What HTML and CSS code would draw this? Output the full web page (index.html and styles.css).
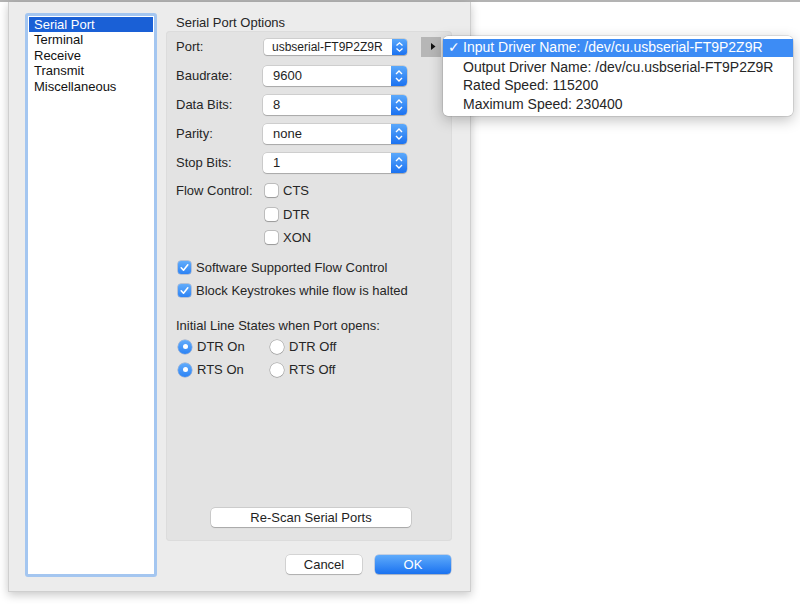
FILE: index.html
```html
<!DOCTYPE html>
<html>
<head>
<meta charset="utf-8">
<link rel="stylesheet" href="styles.css">
</head>
<body>
<div class="topline"></div>
<div class="window">
  <div class="sidebar">
    <ul class="list">
      <li class="selected">Serial Port</li>
      <li>Terminal</li>
      <li>Receive</li>
      <li>Transmit</li>
      <li>Miscellaneous</li>
    </ul>
  </div>
  <div class="main">
    <div class="group-title">Serial Port Options</div>
    <div class="group">
      <div class="row">
        <span class="label">Port:</span>
        <div class="popup small"><span class="ptext">usbserial-FT9P2Z9R</span><span class="stepper"><svg width="15" height="16" viewBox="0 0 15 16"><polyline points="4.5,6.5 7.5,3.8 10.5,6.5" fill="none" stroke="#fff" stroke-width="1.3"/><polyline points="4.5,9.5 7.5,12.2 10.5,9.5" fill="none" stroke="#fff" stroke-width="1.3"/></svg></span></div>
        <div class="disclosure"><svg width="5" height="7" viewBox="0 0 5 7"><polygon points="0,0 4.5,3.5 0,7" fill="#111"/></svg></div>
      </div>
      <div class="row">
        <span class="label">Baudrate:</span>
        <div class="popup"><span class="ptext">9600</span><span class="stepper"><svg width="16" height="20" viewBox="0 0 16 20"><polyline points="5,8 8,5 11,8" fill="none" stroke="#fff" stroke-width="1.4"/><polyline points="5,12 8,15 11,12" fill="none" stroke="#fff" stroke-width="1.4"/></svg></span></div>
      </div>
      <div class="row">
        <span class="label">Data Bits:</span>
        <div class="popup"><span class="ptext">8</span><span class="stepper"><svg width="16" height="20" viewBox="0 0 16 20"><polyline points="5,8 8,5 11,8" fill="none" stroke="#fff" stroke-width="1.4"/><polyline points="5,12 8,15 11,12" fill="none" stroke="#fff" stroke-width="1.4"/></svg></span></div>
      </div>
      <div class="row">
        <span class="label">Parity:</span>
        <div class="popup"><span class="ptext">none</span><span class="stepper"><svg width="16" height="20" viewBox="0 0 16 20"><polyline points="5,8 8,5 11,8" fill="none" stroke="#fff" stroke-width="1.4"/><polyline points="5,12 8,15 11,12" fill="none" stroke="#fff" stroke-width="1.4"/></svg></span></div>
      </div>
      <div class="row">
        <span class="label">Stop Bits:</span>
        <div class="popup"><span class="ptext">1</span><span class="stepper"><svg width="16" height="20" viewBox="0 0 16 20"><polyline points="5,8 8,5 11,8" fill="none" stroke="#fff" stroke-width="1.4"/><polyline points="5,12 8,15 11,12" fill="none" stroke="#fff" stroke-width="1.4"/></svg></span></div>
      </div>

      <div class="flow">
        <div class="flow-label">Flow Control:</div>
        <div class="flow-opts">
          <div class="check-row"><span class="box"></span><span>CTS</span></div>
          <div class="check-row"><span class="box"></span><span>DTR</span></div>
          <div class="check-row"><span class="box"></span><span>XON</span></div>
        </div>
      </div>

      <div class="checks">
        <div class="check-row"><span class="box on"><svg width="13" height="13" viewBox="0 0 13 13"><polyline points="3.2,6.8 5.5,9.2 9.8,3.8" fill="none" stroke="#fff" stroke-width="1.6" stroke-linecap="round" stroke-linejoin="round"/></svg></span><span>Software Supported Flow Control</span></div>
        <div class="check-row"><span class="box on"><svg width="13" height="13" viewBox="0 0 13 13"><polyline points="3.2,6.8 5.5,9.2 9.8,3.8" fill="none" stroke="#fff" stroke-width="1.6" stroke-linecap="round" stroke-linejoin="round"/></svg></span><span>Block Keystrokes while flow is halted</span></div>
      </div>

      <div class="lines-title">Initial Line States when Port opens:</div>
      <div class="radio-grid">
        <div class="radio-row"><span class="radio on"></span><span>DTR On</span></div>
        <div class="radio-row"><span class="radio"></span><span>DTR Off</span></div>
        <div class="radio-row"><span class="radio on"></span><span>RTS On</span></div>
        <div class="radio-row"><span class="radio"></span><span>RTS Off</span></div>
      </div>

      <div class="btn rescan">Re-Scan Serial Ports</div>
    </div>
    <div class="buttons">
      <div class="btn">Cancel</div>
      <div class="btn primary">OK</div>
    </div>
  </div>
</div>

<div class="menu">
  <div class="mitem hl"><span class="mcheck">✓</span>Input Driver Name: /dev/cu.usbserial-FT9P2Z9R</div>
  <div class="mitem">Output Driver Name: /dev/cu.usbserial-FT9P2Z9R</div>
  <div class="mitem">Rated Speed: 115200</div>
  <div class="mitem">Maximum Speed: 230400</div>
</div>
</body>
</html>
```

FILE: styles.css
```css
* { box-sizing: border-box; }
html, body { margin: 0; padding: 0; }
body {
  width: 800px;
  height: 604px;
  background: #ffffff;
  font-family: "Liberation Sans", Arial, sans-serif;
  font-size: 13px;
  color: #242424;
  position: relative;
  overflow: hidden;
}
.topline {
  height: 2px;
  background: #b3b3b3;
}
.window {
  margin-left: 8px;
  width: 463px;
  height: 590px;
  background: #ececec;
  border: 1px solid #cfcfcf;
  border-top: none;
  box-shadow: 0 3px 9px rgba(0,0,0,0.22);
  display: flex;
  padding: 11px 18px 0 16px;
  gap: 9px;
}
.sidebar {
  width: 132px;
  height: 564px;
  border: 3px solid #a4c6f0;
  border-radius: 3px;
  background: #fff;
  padding: 1px 0;
}
.list {
  list-style: none;
  margin: 0;
  padding: 0;
}
.list li {
  height: 15.5px;
  line-height: 15.5px;
  padding-left: 5px;
  margin: 0 1px;
  color: #111;
}
.list li.selected {
  background: #1a60d6;
  color: #fff;
  height: 15px;
  line-height: 15px;
}
.main {
  width: 286px;
  display: flex;
  flex-direction: column;
}
.group-title {
  padding: 2px 0 0 10px;
  height: 18px;
  line-height: 16px;
  color: #262626;
}
.group {
  height: 510px;
  background: #e3e3e3;
  border-radius: 4px;
  box-shadow: inset 0 0 0 1px #dcdcdc;
  padding: 1px 0 0 10px;
  display: flex;
  flex-direction: column;
}
.row {
  height: 29px;
  display: flex;
  align-items: center;
}
.label {
  width: 87px;
  color: #262626;
}
.popup {
  width: 144px;
  height: 20px;
  background: #fff;
  border-radius: 4px;
  box-shadow: 0 0 0 0.5px rgba(0,0,0,0.18), 0 1px 1px rgba(0,0,0,0.18);
  display: flex;
  align-items: center;
  justify-content: space-between;
  padding-left: 10px;
  color: #1e1e1e;
}
.popup.small {
  width: 143px;
  height: 16px;
  margin-left: 1px;
  padding-left: 8px;
  font-size: 12px;
  border-radius: 3px;
}
.stepper {
  width: 16px;
  height: 20px;
  border-radius: 0 4px 4px 0;
  background: linear-gradient(#5aa8fb, #1b72f1);
  display: flex;
  align-items: center;
  justify-content: center;
}
.popup.small .stepper {
  width: 15px;
  height: 16px;
  border-radius: 0 3px 3px 0;
}
.stepper svg { display: block; }
.disclosure {
  width: 20px;
  height: 20px;
  margin-left: 14px;
  background: #b6b6b6;
  display: flex;
  align-items: center;
  justify-content: center;
  padding-left: 4px;
}
.disclosure svg { display: block; }
.flow {
  display: flex;
  margin-top: 2px;
}
.flow-label {
  width: 88px;
  height: 23.5px;
  line-height: 23.5px;
  color: #262626;
}
.flow-opts { display: flex; flex-direction: column; }
.flow-opts .check-row { height: 23.5px; margin-left: 1px; }
.check-row {
  display: flex;
  align-items: center;
  height: 23px;
  gap: 5px;
  color: #262626;
}
.checks {
  margin-top: 6px;
  margin-left: 2px;
}
.box {
  width: 13px;
  height: 13px;
  border-radius: 3px;
  background: #fff;
  box-shadow: 0 0 0 0.5px rgba(0,0,0,0.3), 0 0.5px 1px rgba(0,0,0,0.2);
  display: block;
  flex: none;
}
.box.on {
  background: linear-gradient(#62acfb, #2d83f4);
  box-shadow: 0 0 0 0.5px rgba(0,60,160,0.4);
}
.box svg { display: block; }
.lines-title {
  margin-top: 16.5px;
  height: 16px;
  line-height: 16px;
  color: #262626;
}
.radio-grid {
  margin-top: 1px;
  margin-left: 2px;
  display: grid;
  grid-template-columns: 92px auto;
}
.radio-row {
  display: flex;
  align-items: center;
  height: 23px;
  gap: 5px;
  color: #262626;
}
.radio {
  width: 14px;
  height: 14px;
  border-radius: 50%;
  background: #fff;
  box-shadow: 0 0 0 0.5px rgba(0,0,0,0.3), 0 0.5px 1px rgba(0,0,0,0.2);
  flex: none;
  position: relative;
}
.radio.on {
  background: linear-gradient(#62acfb, #2d83f4);
  box-shadow: 0 0 0 0.5px rgba(0,60,160,0.4);
}
.radio.on::after {
  content: "";
  position: absolute;
  left: 4.5px;
  top: 4.5px;
  width: 5px;
  height: 5px;
  border-radius: 50%;
  background: #fff;
}
.btn {
  height: 19px;
  line-height: 19px;
  text-align: center;
  background: #fff;
  border-radius: 4px;
  box-shadow: 0 0 0 0.5px rgba(0,0,0,0.2), 0 1px 1px rgba(0,0,0,0.18);
  color: #1e1e1e;
}
.rescan {
  width: 200px;
  margin: auto 0 14px 35px;
}
.buttons {
  display: flex;
  justify-content: flex-end;
  gap: 13px;
  margin-top: 14px;
  padding-right: 1px;
}
.buttons .btn { width: 76px; }
.btn.primary {
  background: linear-gradient(#5fabfb, #1a72f0);
  color: #fff;
  box-shadow: 0 0 0 0.5px rgba(0,70,180,0.35), 0 1px 1px rgba(0,0,0,0.15);
}
.menu {
  position: absolute;
  left: 443px;
  top: 36px;
  width: 350px;
  height: 80px;
  background: #fff;
  border-radius: 5px;
  box-shadow: 0 0 0 0.5px rgba(0,0,0,0.18), 0 4px 14px rgba(0,0,0,0.25);
  padding-top: 3px;
  font-size: 14px;
}
.mitem {
  position: relative;
  height: 18.5px;
  line-height: 18.5px;
  padding-left: 20px;
  color: #262626;
}
.mitem.hl {
  background: #3d8cf5;
  color: #fff;
  height: 17.5px;
  line-height: 17.5px;
  margin-bottom: 1px;
}
.mcheck {
  position: absolute;
  left: 5px;
  top: 0;
  font-family: "DejaVu Sans", sans-serif;
  font-size: 14px;
  font-weight: bold;
}
```
